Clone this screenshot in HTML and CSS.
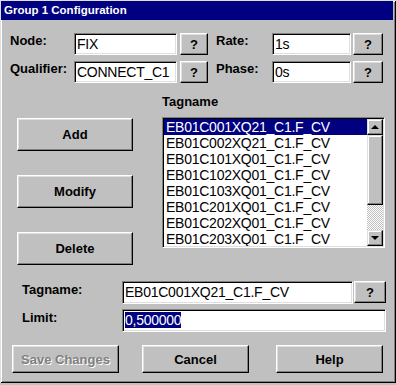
FILE: index.html
```html
<!DOCTYPE html>
<html lang="en">

<head>
    <meta charset="UTF-8">
    <title>Group 1 Configuration</title>
    <link rel="stylesheet" href="styles.css">
</head>

<body>
    <div class="window">
        <div class="titlebar">Group 1 Configuration</div>

        <!-- Node / Rate -->
        <div class="param-row param-row-first">
            <span class="lbl lbl-left">Node:</span>
            <div class="field field-wide">FIX</div>
            <button class="btn btn-q">?</button>
            <span class="lbl lbl-right">Rate:</span>
            <div class="field field-small">1s</div>
            <button class="btn btn-q btn-q-right">?</button>
        </div>

        <!-- Qualifier / Phase -->
        <div class="param-row">
            <span class="lbl lbl-left">Qualifier:</span>
            <div class="field field-wide">CONNECT_C1</div>
            <button class="btn btn-q">?</button>
            <span class="lbl lbl-right">Phase:</span>
            <div class="field field-small">0s</div>
            <button class="btn btn-q btn-q-right">?</button>
        </div>

        <div class="middle">
            <div class="action-col">
                <button class="btn btn-action">Add</button>
                <button class="btn btn-action">Modify</button>
                <button class="btn btn-action">Delete</button>
            </div>
            <div class="list-col">
                <div class="list-caption">Tagname</div>
                <div class="listbox">
                    <ul class="list-items">
                        <li class="selected">EB01C001XQ21_C1.F_CV</li>
                        <li>EB01C002XQ21_C1.F_CV</li>
                        <li>EB01C101XQ01_C1.F_CV</li>
                        <li>EB01C102XQ01_C1.F_CV</li>
                        <li>EB01C103XQ01_C1.F_CV</li>
                        <li>EB01C201XQ01_C1.F_CV</li>
                        <li>EB01C202XQ01_C1.F_CV</li>
                        <li>EB01C203XQ01_C1.F_CV</li>
                    </ul>
                    <div class="scrollbar">
                        <div class="sb-btn"><span class="arrow-up"></span></div>
                        <div class="sb-thumb"></div>
                        <div class="sb-track"></div>
                        <div class="sb-btn"><span class="arrow-down"></span></div>
                    </div>
                </div>
            </div>
        </div>

        <!-- Edit fields -->
        <div class="edit-row">
            <span class="lbl lbl-edit">Tagname:</span>
            <div class="field field-tag">EB01C001XQ21_C1.F_CV</div>
            <button class="btn btn-q btn-q-tag">?</button>
        </div>
        <div class="edit-row edit-row-second">
            <span class="lbl lbl-edit">Limit:</span>
            <div class="field field-limit"><span class="sel-text">0,500000</span></div>
        </div>

        <div class="footer">
            <button class="btn btn-footer btn-disabled">Save Changes</button>
            <button class="btn btn-footer btn-cancel">Cancel</button>
            <button class="btn btn-footer btn-help">Help</button>
        </div>
    </div>
</body>

</html>
```

FILE: styles.css
```css
body {
    margin: 0;
    background-color: #c0c0c0;
    font-family: "Liberation Sans", Arial, sans-serif;
}

.window {
    width: 396px;
    height: 383px;
    box-sizing: border-box;
    padding-top: 1px;
    background-color: #c0c0c0;
    box-shadow: inset 1px 1px #dfdfdf, inset -1px -1px #000,
        inset 2px 2px #fff, inset -2px -2px #808080;
}

.titlebar {
    margin: 0 3px 0 1px;
    height: 19px;
    padding-left: 3px;
    background-color: #000080;
    color: #fff;
    font-weight: bold;
    font-size: 11.5px;
    line-height: 19px;
}

.lbl {
    font-weight: bold;
    font-size: 13px;
    line-height: 14px;
    color: #000;
}

.field {
    box-sizing: border-box;
    height: 22px;
    padding: 0 2px;
    background-color: #fff;
    border: 1px solid;
    border-color: #808080 #fff #fff #808080;
    box-shadow: inset 1px 1px #000, inset -1px -1px #dfdfdf;
    font-size: 14px;
    letter-spacing: -0.25px;
    line-height: 21px;
    white-space: nowrap;
    overflow: hidden;
}

.btn {
    box-sizing: border-box;
    padding: 0;
    background-color: #c0c0c0;
    border: 1px solid;
    border-color: #fff #000 #000 #fff;
    box-shadow: inset -1px -1px #808080, inset 1px 1px #dfdfdf;
    font-family: inherit;
    font-weight: bold;
    font-size: 13px;
    color: #000;
}

/* top parameter rows */
.param-row {
    display: flex;
    align-items: flex-start;
    height: 22px;
    padding-left: 10px;
    margin-top: 6px;
}

.param-row-first {
    margin-top: 13px;
}

.lbl-left {
    width: 64px;
    margin-top: 1px;
}

.lbl-right {
    width: 56px;
    margin-left: 8px;
    margin-top: 1px;
}

.field-wide {
    width: 103px;
}

.field-small {
    width: 79px;
}

.btn-q {
    width: 28px;
    height: 22px;
    margin-left: 3px;
}

.btn-q-right {
    width: 30px;
    margin-left: 2px;
}

/* buttons + list */
.middle {
    display: flex;
    margin-top: 11px;
    padding-left: 17px;
}

.action-col {
    display: flex;
    flex-direction: column;
    gap: 24px;
    width: 116px;
    padding-top: 24px;
}

.btn-action {
    height: 33px;
}

.list-col {
    width: 223px;
    margin-left: 29px;
}

.list-caption {
    height: 15px;
    margin-bottom: 8px;
    font-weight: bold;
    font-size: 13px;
    line-height: 15px;
}

.listbox {
    display: flex;
    box-sizing: border-box;
    height: 131px;
    padding: 1px;
    background-color: #fff;
    border: 1px solid;
    border-color: #808080 #fff #fff #808080;
    box-shadow: inset 1px 1px #000, inset -1px -1px #dfdfdf;
}

.list-items {
    flex: 1;
    margin: 0;
    padding: 0;
    list-style: none;
    overflow: hidden;
}

.list-items li {
    height: 16px;
    padding-left: 2px;
    font-size: 14px;
    letter-spacing: -0.25px;
    line-height: 16px;
    white-space: nowrap;
}

.list-items li.selected {
    background-color: #000080;
    color: #fff;
}

.scrollbar {
    display: flex;
    flex-direction: column;
    width: 16px;
}

.sb-btn,
.sb-thumb {
    box-sizing: border-box;
    background-color: #c0c0c0;
    border: 1px solid;
    border-color: #dfdfdf #000 #000 #dfdfdf;
    box-shadow: inset -1px -1px #808080, inset 1px 1px #fff;
}

.sb-btn {
    display: flex;
    align-items: center;
    justify-content: center;
    height: 16px;
}

.sb-thumb {
    height: 70px;
}

.sb-track {
    height: 25px;
    background: repeating-conic-gradient(#fff 0 25%, #c0c0c0 0 50%) 0 0 / 2px 2px;
}

.arrow-up {
    width: 0;
    height: 0;
    border-left: 4px solid transparent;
    border-right: 4px solid transparent;
    border-bottom: 4px solid #000;
}

.arrow-down {
    width: 0;
    height: 0;
    border-left: 4px solid transparent;
    border-right: 4px solid transparent;
    border-top: 4px solid #000;
}

/* edit rows */
.edit-row {
    display: flex;
    align-items: flex-start;
    height: 23px;
    padding-left: 22px;
    margin-top: 16px;
}

.edit-row-second {
    margin-top: 5px;
}

.lbl-edit {
    width: 100px;
    padding-top: 2px;
}

.field-tag {
    width: 231px;
    height: 23px;
}

.btn-q-tag {
    width: 32px;
    margin-left: 1px;
}

.field-limit {
    width: 264px;
    height: 23px;
}

.sel-text {
    background-color: #000080;
    color: #fff;
}

/* footer buttons */
.footer {
    display: flex;
    padding-left: 12px;
    margin-top: 13px;
}

.btn-footer {
    width: 107px;
    height: 28px;
}

.btn-cancel {
    margin-left: 23px;
}

.btn-help {
    margin-left: 27px;
}

.btn-disabled {
    color: #808080;
    text-shadow: 1px 1px #fff;
}
```
